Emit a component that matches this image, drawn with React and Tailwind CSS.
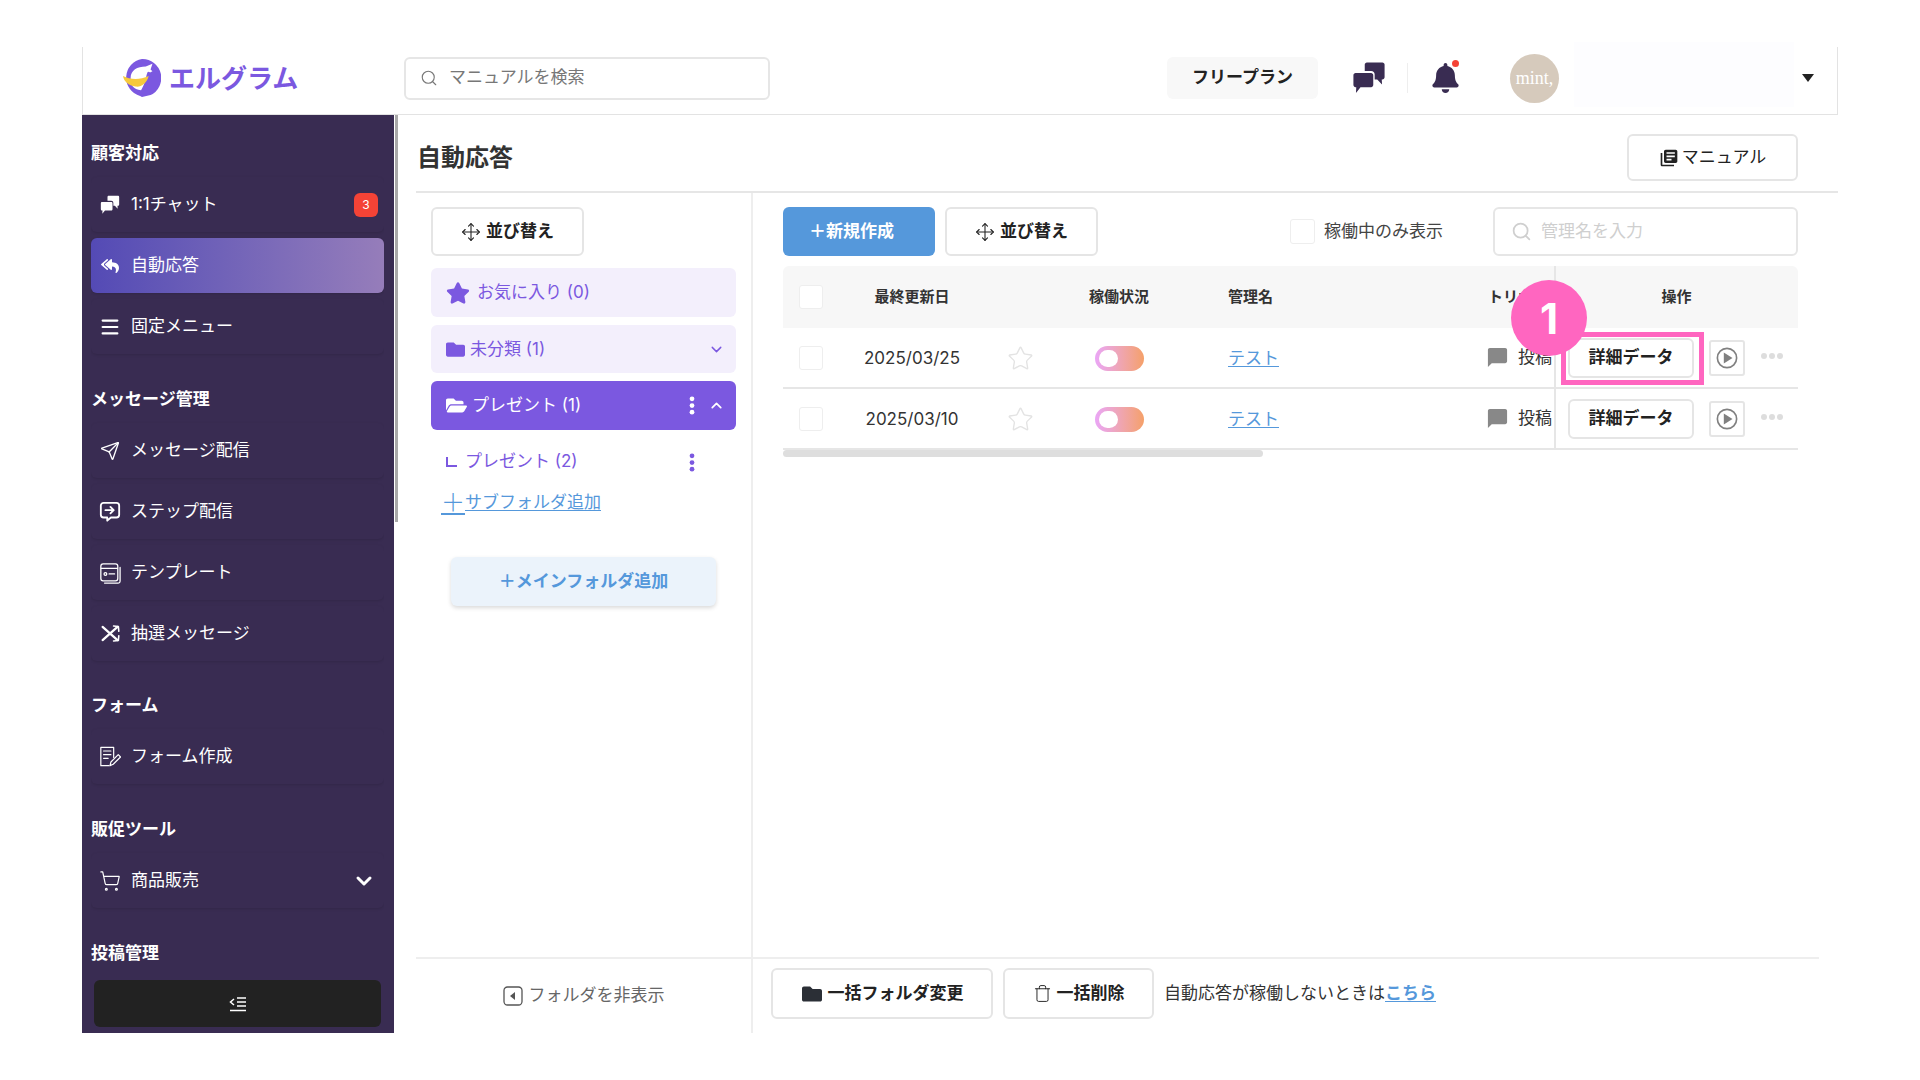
import React from 'react';
import { Search, Move, Star, ChevronDown, ChevronUp, Send, ShoppingCart, Menu, Trash } from 'lucide-react';
import { FaStar, FaFolder, FaFolderOpen, FaReplyAll, FaBell } from 'react-icons/fa';
import { MdLibraryBooks, MdChatBubble } from 'react-icons/md';

function Logo() {
    return (
        <svg viewBox="0 0 40 40" className="w-[38px] h-[38px]">
            <path d="M20 0a20 20 0 0 1 9 38l-9 2-2-1A20 20 0 0 1 20 0Z" fill="#7b58e0" />
            <path d="M8 20C8 12 15 8 24 8l7-3-2 6 2 2-6 3c-1 5-2 10-6 17-8-1-12-6-11-13Z" fill="#fff" />
            <path d="M0 18c8 4 18 4 27 0-2 8-8 12-14 11C6 28 1 24 0 18Z" fill="#f6c93c" />
            <circle cx="27" cy="15" r="1.6" fill="#7b58e0" />
        </svg>
    );
}

function ChatIcon({ className }) {
    return (
        <svg viewBox="0 0 24 24" fill="currentColor" className={className}>
            <path d="M9 2.500C9 1.700 9.700 1 10.500 1h11C22.300 1 23 1.700 23 2.500v9c0 .8-.7 1.500-1.500 1.500H21l.2 3.500-3.400-3.500H16V9.500C16 8 15 7 13.500 7H9V2.500Z" />
            <path d="M1 10c0-.8.7-1.500 1.500-1.500h11c.8 0 1.500.7 1.500 1.500v7c0 .8-.7 1.500-1.500 1.500H6L2.800 22.500 3 18.500h-.5C1.700 18.500 1 17.800 1 17v-7Z" />
        </svg>
    );
}

function StepIcon() {
    return (
        <svg viewBox="0 0 24 24" fill="none" stroke="currentColor" strokeWidth="2" strokeLinecap="round" strokeLinejoin="round" className="w-[23px] h-[23px]">
            <path d="M5 2.500h14a3 3 0 0 1 3 3v10a3 3 0 0 1-3 3h-6l-4 3.500v-3.500H5a3 3 0 0 1-3-3v-10a3 3 0 0 1 3-3Z" />
            <path d="M7 10.500h9M12.500 7l3.500 3.500-3.500 3.500" />
        </svg>
    );
}

function TemplateIcon() {
    return (
        <svg viewBox="0 0 24 24" fill="none" stroke="currentColor" strokeWidth="1.400" strokeLinecap="round" className="w-[22px] h-[22px]">
            <rect x="2" y="2" width="18.500" height="18.500" rx="2.500" />
            <path d="M23 6v15a2 2 0 0 1-2 2H6" />
            <path d="M2.500 7h17.500M11 13h6" />
            <circle cx="7" cy="13" r="1.500" />
        </svg>
    );
}

function FormIcon() {
    return (
        <svg viewBox="0 0 24 24" fill="none" stroke="currentColor" strokeWidth="1.300" strokeLinecap="round" strokeLinejoin="round" className="w-[23px] h-[23px]">
            <path d="M16 13V2H2v20h9" />
            <path d="M5 6h8M5 10h8M5 14h5" />
            <path d="M12 22l1-4 8-8 2.500 2.500-8 8-3.500 1.500Z" />
        </svg>
    );
}

function CrossArrowsIcon() {
    return (
        <svg viewBox="0 0 24 24" fill="none" stroke="currentColor" strokeWidth="2.600" strokeLinecap="round" strokeLinejoin="round" className="w-[21px] h-[21px]">
            <path d="M3 4.500l17 15M3 19.500l17-15" />
            <path d="M15.500 3.500l5.500.5.500 5.500M15.500 20.500l5.500-.5.500-5.500" strokeWidth="1.800" />
        </svg>
    );
}

function Dots({ className }) {
    return (
        <svg viewBox="0 0 6 20" fill="currentColor" className={className}>
            <circle cx="3" cy="3" r="2.500" />
            <circle cx="3" cy="10" r="2.500" />
            <circle cx="3" cy="17" r="2.500" />
        </svg>
    );
}

function PlayIcon() {
    return (
        <svg viewBox="0 0 24 24" className="w-[22px] h-[22px]">
            <circle cx="12" cy="12" r="10.500" fill="none" stroke="#808080" strokeWidth="1.800" />
            <path d="M8.500 6l9.500 6-9.500 6Z" fill="#808080" />
        </svg>
    );
}

function Checkbox() {
    return <div className="w-[24px] h-[24px] bg-white border border-[#eeeeee] rounded-[3px]" />;
}

function NavItem({ icon, label, active, children }) {
    return (
        <div className={`flex items-center h-[55px] pl-2 pr-[6px] gap-[10px] rounded-md text-[17px] text-white shadow-[0_1px_3px_rgba(0,0,0,0.12)] ${active ? 'bg-gradient-to-r from-[#544ab5] to-[#967dba]' : ''}`}>
            <span className="w-[22px] flex justify-center">{icon}</span>
            <span className="flex-1">{label}</span>
            {children}
        </div>
    );
}

function NavSection({ title, className, children }) {
    return (
        <div className={className}>
            <div className="h-[24px] leading-[24px] text-[17px] font-bold text-white">{title}</div>
            {children && <div className="mt-3 flex flex-col gap-[6px]">{children}</div>}
        </div>
    );
}

function Sidebar() {
    return (
        <aside className="w-[312px] flex flex-col bg-[#392c52] pl-[9px] pr-[10px] pb-[6px]">
            <div className="flex-1 overflow-hidden">
                <NavSection title="顧客対応" className="mt-[26px]">
                    <NavItem icon={<ChatIcon className="w-[20px] h-[20px]" />} label="1:1チャット">
                        <span className="w-[24px] h-[24px] flex items-center justify-center rounded-md bg-[#f44336] text-[12px]">3</span>
                    </NavItem>
                    <NavItem icon={<FaReplyAll className="w-[18px] h-[18px]" />} label="自動応答" active />
                    <NavItem icon={<Menu className="w-[22px] h-[22px]" strokeWidth={2.400} />} label="固定メニュー" />
                </NavSection>
                <NavSection title="メッセージ管理" className="mt-[33px]">
                    <NavItem icon={<Send className="w-[20px] h-[20px]" strokeWidth={1.600} />} label="メッセージ配信" />
                    <NavItem icon={<StepIcon />} label="ステップ配信" />
                    <NavItem icon={<TemplateIcon />} label="テンプレート" />
                    <NavItem icon={<CrossArrowsIcon />} label="抽選メッセージ" />
                </NavSection>
                <NavSection title="フォーム" className="mt-[32px]">
                    <NavItem icon={<FormIcon />} label="フォーム作成" />
                </NavSection>
                <NavSection title="販促ツール" className="mt-[33px]">
                    <NavItem icon={<ShoppingCart className="w-[22px] h-[22px]" strokeWidth={1.300} />} label="商品販売">
                        <ChevronDown className="w-[24px] h-[24px] mr-[2px]" strokeWidth={3} />
                    </NavItem>
                </NavSection>
                <NavSection title="投稿管理" className="mt-[33px]" />
            </div>
            <div className="h-[47px] ml-[3px] mr-[3px] flex items-center justify-center rounded-md bg-[#222222] text-white">
                <svg viewBox="0 0 18 16" fill="none" stroke="currentColor" strokeWidth="1.500" className="w-[18px] h-[16px]">
                    <path d="M5 3L1.500 6 5 9M8 2h9M8 6h9M8 10h9M1 14.500h16" />
                </svg>
            </div>
        </aside>
    );
}

function Header() {
    return (
        <header className="h-[68px] pb-[5px] flex items-center border-x border-b border-[#e3e3e3] bg-white">
            <div className="w-[321px] pl-[40px] flex items-center gap-[8px]">
                <Logo />
                <span className="text-[26px] font-bold text-[#7b58e0]">エルグラム</span>
            </div>
            <div className="w-[366px] h-[43px] flex items-center gap-[11px] px-[14px] border-2 border-[#e6e6e6] rounded-md text-[17px] text-[#777777]">
                <Search className="w-[18px] h-[18px]" strokeWidth={1.500} />
                マニュアルを検索
            </div>
            <div className="ml-[397px] w-[151px] h-[42px] flex items-center justify-center rounded-md bg-[#f8f8f8] text-[17px] font-bold text-[#222222]">フリープラン</div>
            <ChatIcon className="ml-[34px] w-[34px] h-[34px] text-[#392c52]" />
            <div className="ml-[21px] w-px h-[30px] bg-[#eeeeee]" />
            <div className="relative ml-[24px]">
                <FaBell className="w-[27px] h-[30px] text-[#392c52]" />
                <span className="absolute -top-[3px] right-0 w-[7px] h-[7px] rounded-full bg-[#f44336]" />
            </div>
            <div className="ml-[51px] w-[49px] h-[49px] flex items-center justify-center rounded-full bg-[#d6cabc] font-['Liberation_Serif',serif] text-[18px] text-white">mint,</div>
            <div className="ml-[15px] w-[220px] h-[65px] self-start -mt-[5px] bg-[#fdfdff]" />
            <div className="ml-[8px] w-0 h-0 border-x-[6px] border-x-transparent border-t-[8px] border-t-[#222222]" />
        </header>
    );
}

function OutlineButton({ className, children }) {
    return (
        <div className={`flex items-center justify-center border-2 border-[#e5e5e5] rounded-md bg-white text-[17px] font-bold text-[#222222] ${className}`}>
            {children}
        </div>
    );
}

function SortButton() {
    return (
        <OutlineButton className="w-[153px] h-[49px] gap-[5px]">
            <Move className="w-[20px] h-[20px]" strokeWidth={1.300} />
            並び替え
        </OutlineButton>
    );
}

function FolderPanel() {
    return (
        <div className="w-[337px] flex flex-col border-r-2 border-[#eeeeee]">
            <div className="flex-1 pt-[14px] pl-[15px] pr-[15px]">
                <SortButton />
                <div className="mt-[12px] h-[49px] flex items-center gap-[7px] pl-[15px] rounded-md bg-[#f3effc] text-[17px] text-[#7b58e0]">
                    <FaStar className="w-[24px] h-[24px]" />
                    <span className="pt-[1px]">お気に入り (0)</span>
                </div>
                <div className="mt-[8px] h-[48px] flex items-center gap-[5px] pl-[15px] pr-[11px] rounded-md bg-[#f3effc] text-[17px] text-[#7b58e0]">
                    <FaFolder className="w-[19px] h-[19px]" />
                    <span className="flex-1 pt-[1px]">未分類 (1)</span>
                    <ChevronDown className="w-[17px] h-[17px]" strokeWidth={2} />
                </div>
                <div className="mt-[8px] h-[49px] flex items-center gap-[5px] pl-[15px] pr-[11px] rounded-md bg-[#7b58e0] text-[17px] text-white">
                    <FaFolderOpen className="w-[21px] h-[19px]" />
                    <span className="flex-1">プレゼント (1)</span>
                    <Dots className="w-[6px] h-[19px] mr-[8px]" />
                    <ChevronUp className="w-[17px] h-[17px]" strokeWidth={2.400} />
                </div>
                <div className="mt-[19px] h-[26px] flex items-center pl-[15px] pr-[41px] text-[17px] text-[#7b58e0]">
                    <span className="w-[11px] h-[10px] mr-[8px] border-l-2 border-b-2 border-[#7b58e0]" />
                    <span className="flex-1">プレゼント (2)</span>
                    <Dots className="w-[6px] h-[19px]" />
                </div>
                <div className="mt-[15px] ml-[10px] w-fit flex items-center h-[26px] text-[17px] text-[#5598db] underline underline-offset-2">
                    <span className="text-[24px] font-light leading-none">＋</span>サブフォルダ追加
                </div>
                <div className="mt-[41px] ml-[20px] w-[265px] h-[49px] flex items-center justify-center rounded-md bg-[#ebf3fb] text-[17px] font-bold text-[#5598db] shadow-[0_2px_4px_rgba(0,0,0,0.15)]">
                    ＋メインフォルダ追加
                </div>
            </div>
            <div className="h-[76px] flex items-center justify-center gap-[6px] border-t-2 border-[#eeeeee] text-[17px] text-[#666666]">
                <svg viewBox="0 0 20 20" className="w-[20px] h-[20px]" fill="none" stroke="#555555" strokeWidth="1.300">
                    <rect x="1" y="1" width="18" height="18" rx="3.500" />
                    <path d="M12 6v8l-5-4Z" fill="#555555" stroke="none" />
                </svg>
                フォルダを非表示
            </div>
        </div>
    );
}

function Row({ date }) {
    return (
        <div className="grid grid-cols-[56px_146px_70px_128px_303px_68px_243px] h-[61px] items-center border-b-2 border-[#e6e6e6] text-[17px] text-[#333333]">
            <div className="pt-[1px] flex justify-center"><Checkbox /></div>
            <div className="pt-[2px] text-center">{date}</div>
            <div className="pt-[1px] flex justify-center">
                <Star className="w-[27px] h-[27px] text-[#e3e3e3]" strokeWidth={1.200} />
            </div>
            <div className="pt-[1px] flex justify-center">
                <div className="w-[49px] h-[25px] p-[4px] rounded-full bg-gradient-to-r from-[#eaa6f6] to-[#f5a068]">
                    <div className="w-[19px] h-[17px] rounded-full bg-white" />
                </div>
            </div>
            <div className="pt-[2px] pl-[45px]"><span className="text-[#5598db] underline underline-offset-2">テスト</span></div>
            <div className="flex items-center gap-[9px] whitespace-nowrap">
                <MdChatBubble className="w-[23px] h-[23px] text-[#888888]" />
                投稿
            </div>
            <div className="h-full pt-[1px] flex items-center pl-[12px] border-l-2 border-[#e6e6e6]">
                <OutlineButton className="w-[126px] h-[40px]">詳細データ</OutlineButton>
                <div className="ml-[15px] w-[36px] h-[36px] flex items-center justify-center border-2 border-[#e5e5e5] rounded-[3px]">
                    <PlayIcon />
                </div>
                <div className="ml-[16px] flex gap-[2px] -mt-[4px]">
                    <span className="w-[6px] h-[6px] rounded-full bg-[#dddddd]" />
                    <span className="w-[6px] h-[6px] rounded-full bg-[#dddddd]" />
                    <span className="w-[6px] h-[6px] rounded-full bg-[#dddddd]" />
                </div>
            </div>
        </div>
    );
}

function ListPanel() {
    return (
        <div className="flex-1 flex flex-col">
            <div className="flex-1 pt-[14px] pl-[30px] pr-[40px]">
                <div className="flex items-center">
                    <div className="w-[152px] h-[49px] pr-[15px] flex items-center justify-center rounded-md bg-[#5598db] text-[17px] font-bold text-white">＋新規作成</div>
                    <div className="ml-[10px]"><SortButton /></div>
                    <div className="ml-auto w-[25px] h-[25px] bg-white border border-[#eeeeee] rounded-[3px]" />
                    <span className="ml-[9px] text-[17px] text-[#444444]">稼働中のみ表示</span>
                    <div className="ml-[50px] w-[305px] h-[49px] flex items-center gap-[9px] px-[16px] border-2 border-[#e6e6e6] rounded-md text-[17px] text-[#cfcfcf]">
                        <Search className="w-[21px] h-[21px]" strokeWidth={2} />
                        管理名を入力
                    </div>
                </div>
                <div className="relative mt-[10px]">
                    <div className="grid grid-cols-[56px_146px_70px_128px_303px_68px_243px] h-[62px] items-center rounded-t-md bg-[#f7f7f7] text-[15px] font-bold text-[#333333]">
                        <div className="flex justify-center"><Checkbox /></div>
                        <div className="text-center">最終更新日</div>
                        <div />
                        <div className="text-center">稼働状況</div>
                        <div className="pl-[45px]">管理名</div>
                        <div className="whitespace-nowrap pl-[2px]">トリガー</div>
                        <div className="h-full flex items-center justify-center border-l-2 border-[#e6e6e6]">操作</div>
                    </div>
                    <Row date="2025/03/25" />
                    <Row date="2025/03/10" />
                    <div className="w-[480px] h-[7px] rounded-full bg-[#dedede]" />
                    <div className="absolute left-[778px] top-[66px] w-[143px] h-[53px] border-[5px] border-[#ff66c0]" />
                    <div className="absolute left-[728px] top-[14px] w-[76px] h-[76px] flex items-center justify-center rounded-full bg-[#ff66c0] text-[42px] font-bold text-white">1</div>
                </div>
            </div>
            <div className="h-[76px] pb-[5px] mr-[19px] flex items-center gap-[10px] pl-[18px] border-t-2 border-[#eeeeee]">
                <OutlineButton className="w-[222px] h-[51px] gap-[5px]">
                    <FaFolder className="w-[22px] h-[20px] text-[#2b2f36]" />
                    一括フォルダ変更
                </OutlineButton>
                <OutlineButton className="w-[151px] h-[51px] gap-[5px]">
                    <Trash className="w-[19px] h-[19px]" strokeWidth={1.200} />
                    一括削除
                </OutlineButton>
                <span className="text-[17px] text-[#333333]">
                    自動応答が稼働しないときは<span className="font-bold text-[#5598db] underline underline-offset-2">こちら</span>
                </span>
            </div>
        </div>
    );
}

export default function App() {
    return (
        <div className="w-[1920px] h-[1080px] bg-white pt-[47px] pl-[82px] font-['Inter','Noto_Sans_CJK_JP',sans-serif]">
            <div className="w-[1756px]">
                <Header />
                <div className="flex h-[918px]">
                    <Sidebar />
                    <div className="w-[4px] pl-[1px]">
                        <div className="w-[3px] h-[407px] bg-[#a9a9a9]" />
                    </div>
                    <main className="flex-1 flex flex-col pl-[18px]">
                        <div className="h-[78px] pt-[9px] flex items-center justify-between pl-[1px] pr-[40px] border-b-2 border-[#e6e6e6]">
                            <h1 className="text-[24px] font-bold text-[#333333]">自動応答</h1>
                            <OutlineButton className="w-[171px] h-[47px] gap-[3px] !font-normal">
                                <MdLibraryBooks className="w-[20px] h-[20px]" />
                                マニュアル
                            </OutlineButton>
                        </div>
                        <div className="flex-1 flex">
                            <FolderPanel />
                            <ListPanel />
                        </div>
                    </main>
                </div>
            </div>
        </div>
    );
}
